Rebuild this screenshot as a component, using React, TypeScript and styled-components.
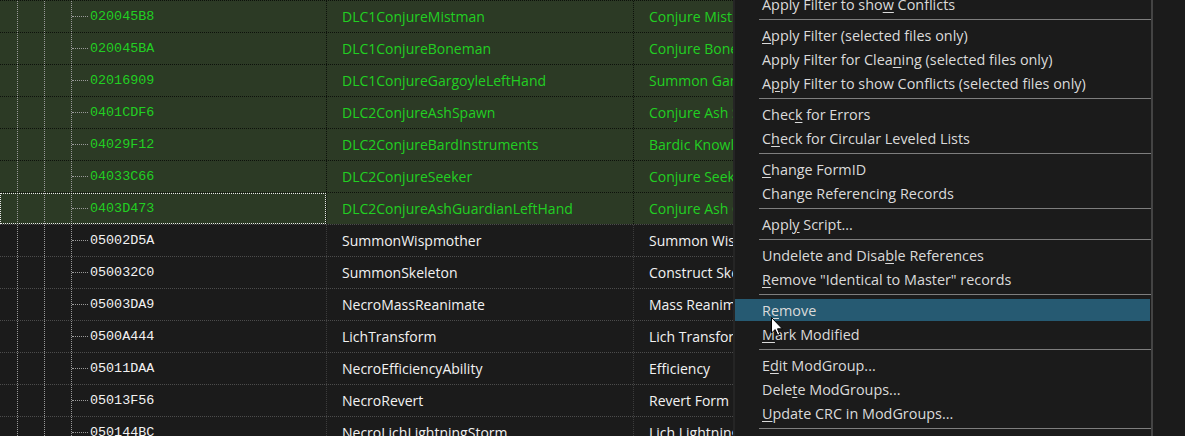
import React from "react";
import styled, { createGlobalStyle } from "styled-components";

const Global = createGlobalStyle`
  html, body { margin: 0; padding: 0; background: #1b1b1b; }
  body { width: 1185px; height: 436px; overflow: hidden; }
  #root { width: 1185px; height: 436px; }
`;

const Screen = styled.div`
  position: relative;
  width: 1185px;
  height: 436px;
  overflow: hidden;
  background: #1b1b1b;
`;

const Grid = styled.div`
  display: flex;
  flex-direction: column;
  width: 1153px;
`;

type Tone = "green" | "dark";

const Row = styled.div<{ $tone: Tone }>`
  display: grid;
  grid-template-columns: 326px 307px 1fr;
  height: 32px;
  box-sizing: border-box;
  border-top: 1px dotted ${(p) => (p.$tone === "green" ? "#0d110b" : "#4c4c4c")};
  background: ${(p) => (p.$tone === "green" ? "#2c3a25" : "#1b1b1b")};
  color: ${(p) => (p.$tone === "green" ? "#22cf22" : "#f2f2f2")};
`;

const TreeCell = styled.div<{ $focused?: boolean }>`
  display: flex;
  align-items: stretch;
  min-width: 0;
  outline: ${(p) => (p.$focused ? "1px dotted #e8e8e8" : "none")};
  outline-offset: -1px;
`;

const Guide = styled.div<{ $w: number }>`
  width: ${(p) => p.$w}px;
  flex: none;
  border-right: 1px dotted #9a9a9a;
`;

const Connector = styled.div`
  width: 16px;
  flex: none;
  align-self: center;
  border-top: 1px dotted #9a9a9a;
  margin-right: 2px;
`;

const FormId = styled.span`
  align-self: center;
  font-family: "Liberation Mono", "DejaVu Sans Mono", monospace;
  font-size: 13.4px;
  white-space: nowrap;
`;

const TextCell = styled.div<{ $tone: Tone }>`
  display: flex;
  align-items: center;
  padding-left: 15px;
  border-left: 1px dotted ${(p) => (p.$tone === "green" ? "#0d110b" : "#3c3c3c")};
  font-family: "Open Sans", "Noto Sans", sans-serif;
  font-size: 14px;
  white-space: nowrap;
  overflow: hidden;
  min-width: 0;
`;

const Menu = styled.div`
  position: absolute;
  left: 733px;
  top: 0;
  width: 420px;
  height: 436px;
  box-sizing: border-box;
  background: #1b1b1b;
  border-left: 2px solid #252525;
  border-right: 2px solid #444444;
  overflow: hidden;
`;

const MenuList = styled.div`
  display: flex;
  flex-direction: column;
  margin-top: -8px;
`;

const MenuItem = styled.div`
  height: 24px;
  box-sizing: border-box;
  padding: 1px 1px 1px 0;
  flex: none;
`;

const MenuItemInner = styled.div<{ $active?: boolean }>`
  height: 22px;
  display: flex;
  align-items: center;
  padding-left: 27px;
  background: ${(p) => (p.$active ? "#265a72" : "transparent")};
  color: #dadada;
  font-family: "Open Sans", "Noto Sans", sans-serif;
  font-size: 14.4px;
  white-space: nowrap;
`;

const LabelText = styled.span`
  white-space: pre;
`;

const Key = styled.span`
  text-decoration: underline;
  text-underline-offset: 2px;
  text-decoration-thickness: 1px;
`;

const Separator = styled.div`
  height: 7px;
  flex: none;
  display: flex;
  align-items: center;
  padding-left: 24px;
  &::after {
    content: "";
    flex: 1;
    height: 1px;
    background: #7e7e7e;
  }
`;

const Cursor = styled.svg`
  position: absolute;
  left: 771px;
  top: 317px;
  width: 12px;
  height: 19px;
`;

type Rec = [string, string, string, Tone, boolean?];

const records: Rec[] = [
  ["020045B8", "DLC1ConjureMistman", "Conjure Mistman", "green"],
  ["020045BA", "DLC1ConjureBoneman", "Conjure Boneman", "green"],
  ["02016909", "DLC1ConjureGargoyleLeftHand", "Summon Gargoyle", "green"],
  ["0401CDF6", "DLC2ConjureAshSpawn", "Conjure Ash Spawn", "green"],
  ["04029F12", "DLC2ConjureBardInstruments", "Bardic Knowledge", "green"],
  ["04033C66", "DLC2ConjureSeeker", "Conjure Seeker", "green"],
  ["0403D473", "DLC2ConjureAshGuardianLeftHand", "Conjure Ash Guardian", "green", true],
  ["05002D5A", "SummonWispmother", "Summon Wispmother", "dark"],
  ["050032C0", "SummonSkeleton", "Construct Skeleton", "dark"],
  ["05003DA9", "NecroMassReanimate", "Mass Reanimation", "dark"],
  ["0500A444", "LichTransform", "Lich Transform", "dark"],
  ["05011DAA", "NecroEfficiencyAbility", "Efficiency", "dark"],
  ["05013F56", "NecroRevert", "Revert Form", "dark"],
  ["050144BC", "NecroLichLightningStorm", "Lich Lightning Storm", "dark"],
];

type Entry = { sep: true } | { label: string; key?: number; active?: boolean };

const entries: Entry[] = [
  { label: "Apply Filter to show Conflicts", key: 19 },
  { sep: true },
  { label: "Apply Filter (selected files only)", key: 0 },
  { label: "Apply Filter for Cleaning (selected files only)", key: 21 },
  { label: "Apply Filter to show Conflicts (selected files only)", key: 1 },
  { sep: true },
  { label: "Check for Errors", key: 4 },
  { label: "Check for Circular Leveled Lists", key: 1 },
  { sep: true },
  { label: "Change FormID", key: 0 },
  { label: "Change Referencing Records" },
  { sep: true },
  { label: "Apply Script...", key: 4 },
  { sep: true },
  { label: "Undelete and Disable References", key: 17 },
  { label: "Remove \"Identical to Master\" records", key: 0 },
  { sep: true },
  { label: "Remove", key: 1, active: true },
  { label: "Mark Modified", key: 0 },
  { sep: true },
  { label: "Edit ModGroup...", key: 1 },
  { label: "Delete ModGroups...", key: 4 },
  { label: "Update CRC in ModGroups...", key: 0 },
  { sep: true },
  { label: "Compare Selected" },
];

function Label({ text, k }: { text: string; k?: number }) {
  if (k === undefined) return <LabelText>{text}</LabelText>;
  return (
    <LabelText>
      {text.slice(0, k)}
      <Key>{text[k]}</Key>
      {text.slice(k + 1)}
    </LabelText>
  );
}

export default function App() {
  return (
    <Screen>
      <Global />
      <Grid>
        {records.map(([id, name, full, tone, focused]) => (
          <Row key={id} $tone={tone}>
            <TreeCell $focused={focused}>
              <Guide $w={17} />
              <Guide $w={26} />
              <Guide $w={26} />
              <Connector />
              <FormId>{id}</FormId>
            </TreeCell>
            <TextCell $tone={tone}>{name}</TextCell>
            <TextCell $tone={tone}>{full}</TextCell>
          </Row>
        ))}
      </Grid>
      <Menu>
        <MenuList>
          {entries.map((e, i) =>
            "sep" in e ? (
              <Separator key={i} />
            ) : (
              <MenuItem key={i}>
                <MenuItemInner $active={e.active}>
                  <Label text={e.label} k={e.key} />
                </MenuItemInner>
              </MenuItem>
            )
          )}
        </MenuList>
      </Menu>
      <Cursor viewBox="0 0 12 19">
        <path
          d="M0.5 0.5 L0.5 16 L4.2 12.6 L6.6 18.2 L8.8 17.3 L6.5 11.8 L11.3 11.8 Z"
          fill="#ffffff"
          stroke="#000000"
          strokeWidth="1"
          strokeLinejoin="round"
        />
      </Cursor>
    </Screen>
  );
}
